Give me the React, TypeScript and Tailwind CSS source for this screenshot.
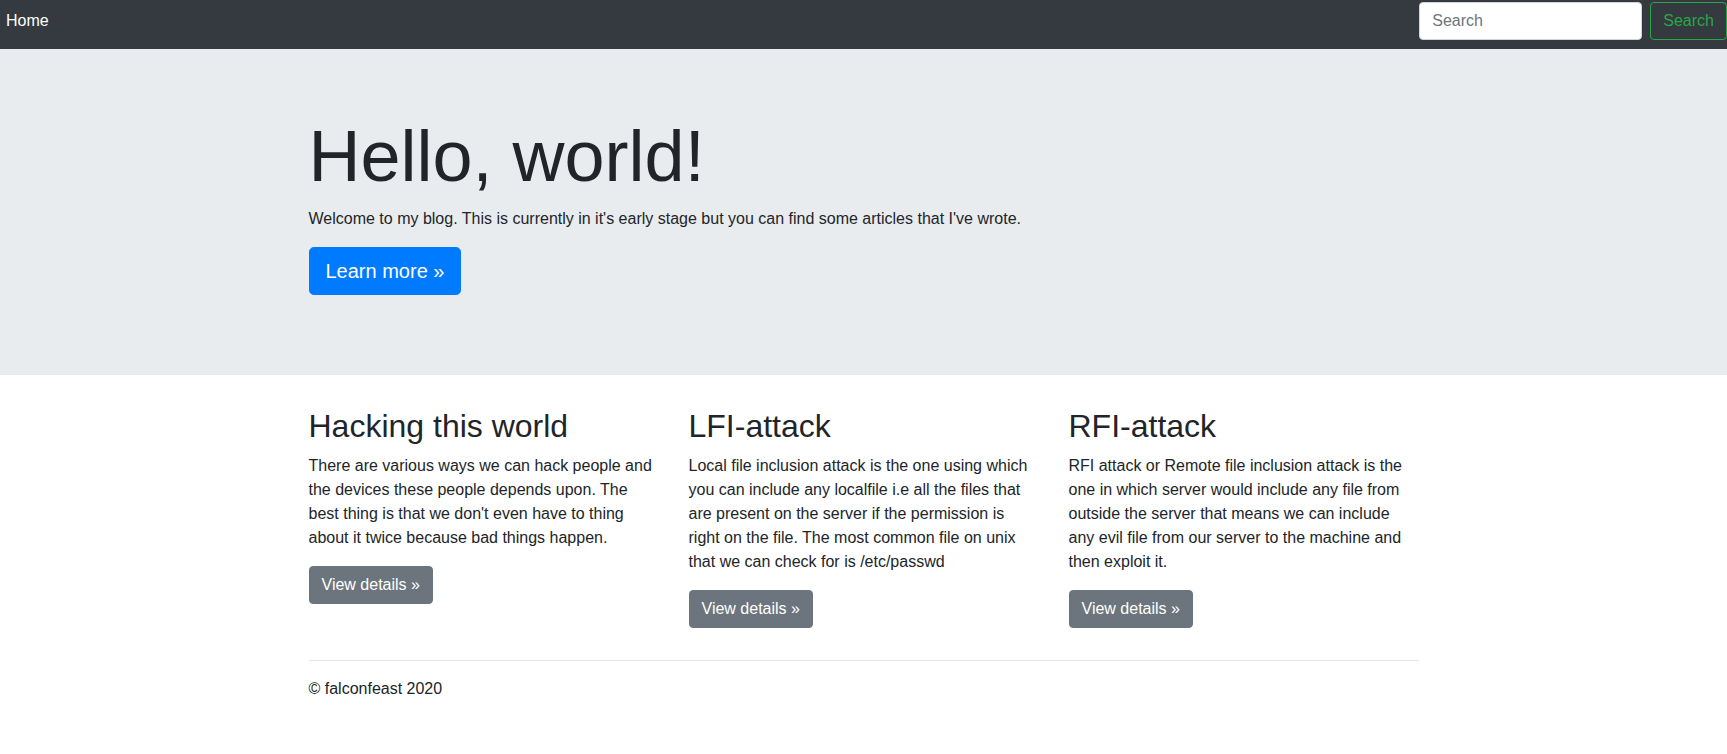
export default function App() {
  const font = { fontFamily: '"Liberation Sans", Arial, sans-serif' };

  const articles = [
    {
      title: "Hacking this world",
      body: "There are various ways we can hack people and the devices these people depends upon. The best thing is that we don't even have to thing about it twice because bad things happen.",
    },
    {
      title: "LFI-attack",
      body: "Local file inclusion attack is the one using which you can include any localfile i.e all the files that are present on the server if the permission is right on the file. The most common file on unix that we can check for is /etc/passwd",
    },
    {
      title: "RFI-attack",
      body: "RFI attack or Remote file inclusion attack is the one in which server would include any file from outside the server that means we can include any evil file from our server to the machine and then exploit it.",
    },
  ];

  return (
    <div className="min-h-screen bg-white text-[#212529] text-base leading-6" style={font}>
      <nav className="h-[49px] bg-[#343a40] flex items-start justify-between overflow-hidden">
        <a href="#" className="text-white pl-[6px] pt-[9px] leading-6">
          Home
        </a>
        <form className="flex items-center mt-[2px]" onSubmit={(e) => e.preventDefault()}>
          <input
            type="search"
            placeholder="Search"
            className="w-[223px] h-[38px] px-3 py-1.5 bg-white border border-[#ced4da] rounded text-[#495057] placeholder:text-[#6c757d] outline-none"
          />
          <button
            type="submit"
            className="ml-[8px] h-[38px] px-3 border border-[#28a745] rounded text-[#28a745] bg-transparent"
          >
            Search
          </button>
        </form>
      </nav>

      <div className="bg-[#e9ecef] py-16 mb-8">
        <div className="mx-auto w-[1140px] px-[15px]">
          <h1 className="text-[72px] leading-[1.2] font-light mb-2">Hello, world!</h1>
          <p className="mb-4">
            Welcome to my blog. This is currently in it's early stage but you can find some articles that I've wrote.
          </p>
          <p className="mb-4">
            <a
              href="#"
              className="inline-block bg-[#007bff] border border-[#007bff] text-white text-[20px] leading-[1.5] px-4 py-2 rounded-[4.8px]"
            >
              Learn more &raquo;
            </a>
          </p>
        </div>
      </div>

      <div className="mx-auto w-[1140px] px-[15px]">
        <div className="grid grid-cols-3 gap-[30px]">
          {articles.map((a) => (
            <div key={a.title}>
              <h2 className="text-[32px] leading-[1.2] font-medium mb-2">{a.title}</h2>
              <p className="mb-4">{a.body}</p>
              <p className="mb-4">
                <a
                  href="#"
                  className="inline-block bg-[#6c757d] border border-[#6c757d] text-white px-3 py-1.5 rounded"
                >
                  View details &raquo;
                </a>
              </p>
            </div>
          ))}
        </div>
        <hr className="my-4 border-0 border-t border-[rgba(0,0,0,0.1)]" />
      </div>

      <footer className="mx-auto w-[1140px] px-[15px]">
        <p className="mb-4">&copy; falconfeast 2020</p>
      </footer>
    </div>
  );
}
